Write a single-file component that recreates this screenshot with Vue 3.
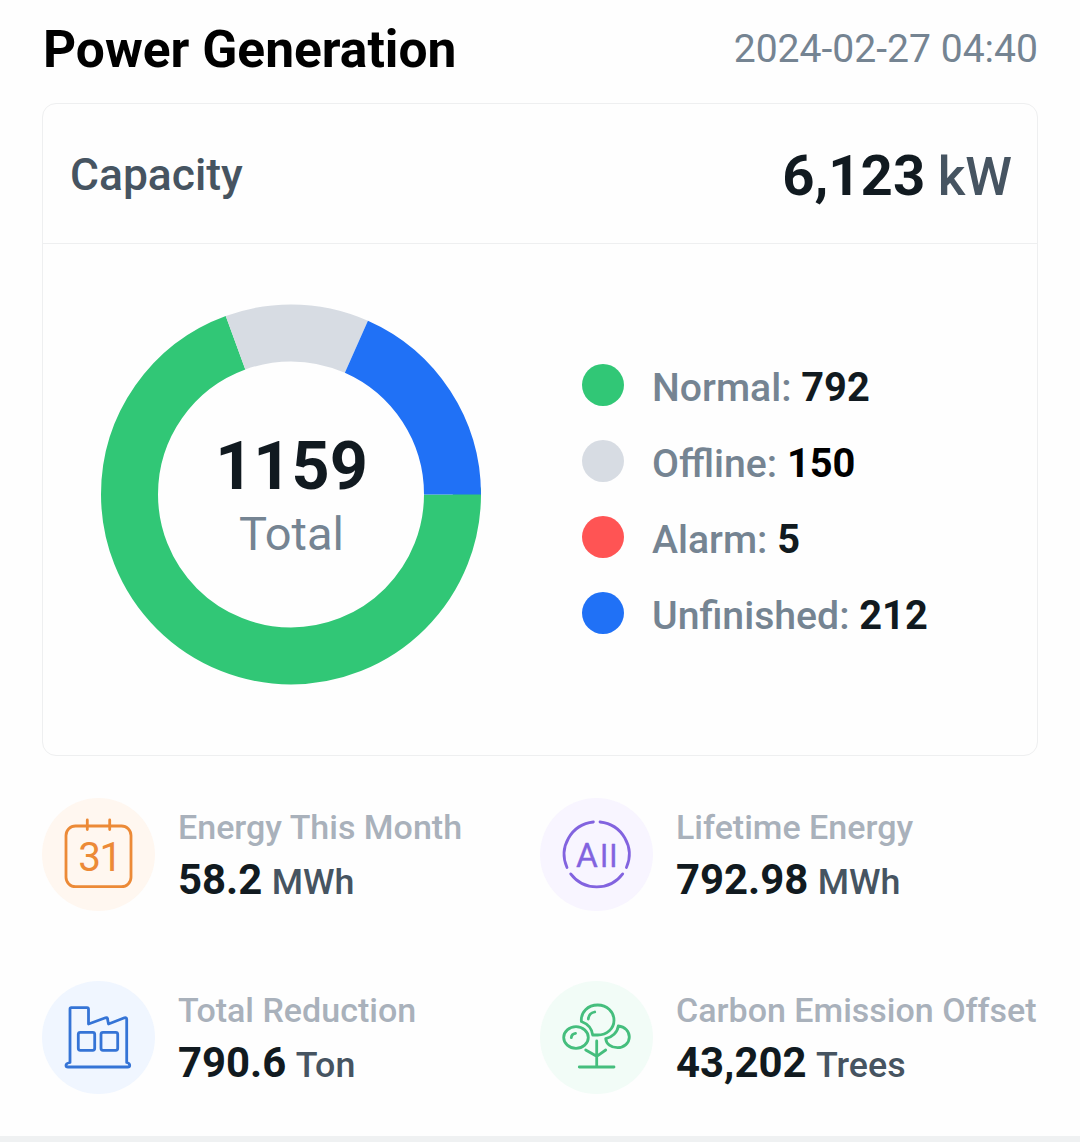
<template>
  <div class="panel">
    <header class="panel-head">
      <h1 class="title">Power Generation</h1>
      <span class="date">2024-02-27 04:40</span>
    </header>

    <section class="card">
      <div class="capacity">
        <span class="capacity-label">Capacity</span>
        <span class="capacity-value">6,123 <span class="capacity-unit">kW</span></span>
      </div>

      <div class="card-body">
        <div class="donut">
          <svg class="ring" viewBox="0 0 380 380">
            <circle
              v-for="s in slices"
              :key="s.color"
              cx="190"
              cy="190.4"
              r="161.5"
              fill="none"
              stroke-width="57"
              pathLength="360"
              :stroke="s.color"
              :stroke-dasharray="`${s.sweep} ${360 - s.sweep}`"
              :stroke-dashoffset="-s.start"
            />
          </svg>
          <div class="donut-text">
            <span class="donut-number">1159</span>
            <span class="donut-label">Total</span>
          </div>
        </div>

        <ul class="legend">
          <li v-for="item in legend" :key="item.label" class="legend-item">
            <span class="dot" :class="item.key"></span>
            <span class="legend-text">{{ item.label }}: <b :class="item.key">{{ item.value }}</b></span>
          </li>
        </ul>
      </div>
    </section>

    <section class="stats">
      <div v-for="stat in stats" :key="stat.label" class="stat">
        <div class="stat-icon" :class="stat.icon">
          <svg v-if="stat.icon === 'month'" viewBox="0 0 113 113">
            <rect x="24" y="28" width="65" height="60.7" rx="9.5" />
            <path d="M45.3 22v9.5M67.7 22v9.5" />
            <text class="icon-text" font-size="40.5" y="72.5" x="36.2 57.6">31</text>
          </svg>

          <svg v-else-if="stat.icon === 'lifetime'" viewBox="0 0 113 113">
            <path d="M60 24A32.5 32.5 0 0 1 86.4 69.5M82.7 75.9A32.5 32.5 0 0 1 30.7 75.9M27 69.5A32.5 32.5 0 0 1 53.4 24" />
            <text class="icon-text all" font-size="33.5" y="69.3" x="36 60.2 69.4">A<tspan font-size="31.8">ll</tspan></text>
          </svg>

          <svg v-else-if="stat.icon === 'reduction'" viewBox="0 0 113 113">
            <path d="M28 81.5V28q0-1.3 1.3-1.3H45q1.5 0 1.5 1.5V43L63.5 36.8q2-.6 2 1.2L66.5 43 82.5 36.8q2.2-.6 2.2 1.4V81.5q3 .8 3 2.7 0 1.8-2 1.8H26q-2 0-2-1.8 0-1.9 4-2.7z" />
            <rect x="36.3" y="51.3" width="16.4" height="18" rx="2" />
            <rect x="59" y="51.3" width="16.7" height="18" rx="2" />
          </svg>

          <svg v-else viewBox="0 0 113 113">
            <path d="M41.4 40.5C40.5 31 48 24 57.7 24C67 24 74 31 74 39.2C74 47.5 67 54 57.7 54H52.7C52 48.5 48 43 41.4 40.5z" />
            <ellipse cx="36" cy="56.5" rx="12.3" ry="10.8" />
            <path d="M78.3 45C85 45.5 89.3 50.5 89.3 56C89.3 62 84 66.7 77.5 66.7C71 66.7 66.2 63 65.7 57.7C72 56.2 77.5 51.5 78.3 45z" />
            <path d="M48.3 38Q48.7 32.2 54.7 31M31.3 56.7Q31.5 52.9 35.5 52.3" />
            <path d="M56.7 60V86M45.7 69L56.7 75.3L65.7 69M39.3 86H74" />
          </svg>
        </div>
        <div class="stat-info">
          <span class="stat-label">{{ stat.label }}</span>
          <span class="stat-value">{{ stat.value }} <span class="stat-unit">{{ stat.unit }}</span></span>
        </div>
      </div>
    </section>

    <div class="bottom-bar"></div>
  </div>
</template>

<script setup>
// angles in degrees, clockwise from 3 o'clock
const slices = [
  { color: '#31c776', start: 0, sweep: 249.9 },
  { color: '#d7dce3', start: 249.9, sweep: 44 },
  { color: '#2071f6', start: 293.9, sweep: 66.1 }
]

const legend = [
  { key: 'normal', label: 'Normal', value: 792 },
  { key: 'offline', label: 'Offline', value: 150 },
  { key: 'alarm', label: 'Alarm', value: 5 },
  { key: 'unfinished', label: 'Unfinished', value: 212 }
]

const stats = [
  { icon: 'month', label: 'Energy This Month', value: '58.2', unit: 'MWh' },
  { icon: 'lifetime', label: 'Lifetime Energy', value: '792.98', unit: 'MWh' },
  { icon: 'reduction', label: 'Total Reduction', value: '790.6', unit: 'Ton' },
  { icon: 'offset', label: 'Carbon Emission Offset', value: '43,202', unit: 'Trees' }
]
</script>

<style>
body {
  background: #fefefe;
}
</style>

<style scoped>
.panel {
  box-sizing: border-box;
  display: flex;
  flex-direction: column;
  width: 1080px;
  height: 1142px;
  background: #fefefe;
  font-family: Roboto, "Liberation Sans", sans-serif;
  color: #111a20;
  white-space: nowrap;
}
.panel-head {
  display: flex;
  align-items: center;
  justify-content: space-between;
  height: 98px;
  padding: 0 42px 0 43px;
  margin-bottom: 5px;
}
.title {
  margin: 0;
  font-size: 51.5px;
  font-weight: 700;
  color: #000;
}
.date {
  font-size: 39.1px;
  color: #758492;
}

.card {
  box-sizing: border-box;
  display: flex;
  flex-direction: column;
  height: 653px;
  margin: 0 42px;
  border: 1px solid #eeeff0;
  border-radius: 14px;
}
.capacity {
  display: flex;
  align-items: center;
  justify-content: space-between;
  height: 139px;
  padding: 0 25px 0 27px;
  border-bottom: 1px solid #eeeff0;
}
.capacity-label {
  padding-top: 2px;
  font-size: 44.4px;
  font-weight: 500;
  color: #465461;
}
.capacity-value {
  padding-top: 5px;
  font-size: 56.3px;
  font-weight: 700;
  word-spacing: -1.5px;
}
.capacity-unit {
  font-size: 53px;
  font-weight: 500;
  color: #465461;
}

.card-body {
  flex: 1;
  display: flex;
  align-items: center;
  padding: 0 0 1px 58px;
}
.donut {
  display: grid;
  width: 380px;
  height: 380px;
  margin-bottom: 10px;
}
.ring,
.donut-text {
  grid-area: 1 / 1;
}
.ring {
  overflow: visible;
}
.donut-text {
  display: flex;
  flex-direction: column;
  align-items: center;
  justify-content: center;
  padding: 10px 0 0 1px;
}
.donut-number {
  font-size: 66.5px;
  font-weight: 700;
  line-height: 70px;
}
.donut-label {
  font-size: 47px;
  line-height: 66px;
  color: #758492;
}

.legend {
  display: flex;
  flex-direction: column;
  gap: 34px;
  margin: 0 0 0 101px;
  padding: 0;
  list-style: none;
}
.legend-item {
  display: flex;
  align-items: center;
  gap: 28px;
  height: 42px;
}
.dot {
  width: 42px;
  height: 42px;
  border-radius: 50%;
}
.dot.normal { background: #31c776; }
.dot.offline { background: #d7dce3; }
.dot.alarm { background: #ff5454; }
.dot.unfinished { background: #2071f6; }
.legend-text {
  padding-top: 4px;
  font-size: 39.2px;
  font-weight: 500;
  color: #758492;
}
.legend-text b {
  font-size: 39.8px;
  font-weight: 700;
  color: #111a20;
}
.legend-text b.offline {
  color: #000;
}

.stats {
  display: grid;
  grid-template-columns: 498px 498px;
  row-gap: 70px;
  margin: 42px 42px 0;
}
.stat {
  display: flex;
  align-items: center;
  gap: 23px;
  height: 113px;
}
.stat-icon {
  width: 113px;
  height: 113px;
  border-radius: 50%;
}
.stat-icon svg {
  display: block;
  fill: none;
  stroke: currentColor;
  stroke-width: 2.8;
  stroke-linecap: round;
  stroke-linejoin: round;
}
.stat-icon.month { background: #fff7f0; color: #ec8a37; }
.stat-icon.lifetime { background: #f8f5ff; color: #8263df; }
.stat-icon.reduction { background: #f0f6ff; color: #3574d6; }
.stat-icon.offset { background: #f2fcf7; color: #45be7d; }
.stat-icon .icon-text {
  fill: currentColor;
  stroke: none;
  font-family: Roboto, sans-serif;
  font-weight: 400;
}
.stat-icon .icon-text.all {
  stroke: currentColor;
  stroke-width: 0.3;
}
.stat-info {
  display: flex;
  flex-direction: column;
}
.stat-label {
  font-size: 34px;
  font-weight: 500;
  line-height: 50px;
  color: #a9b1bb;
}
.stat-value {
  font-size: 41.9px;
  font-weight: 700;
  line-height: 56px;
  margin-bottom: -2px;
  word-spacing: -1px;
}
.stat-unit {
  font-size: 35.8px;
  font-weight: 500;
  color: #465461;
}

.bottom-bar {
  height: 6px;
  margin-top: auto;
  background: #eff1f2;
}
</style>
